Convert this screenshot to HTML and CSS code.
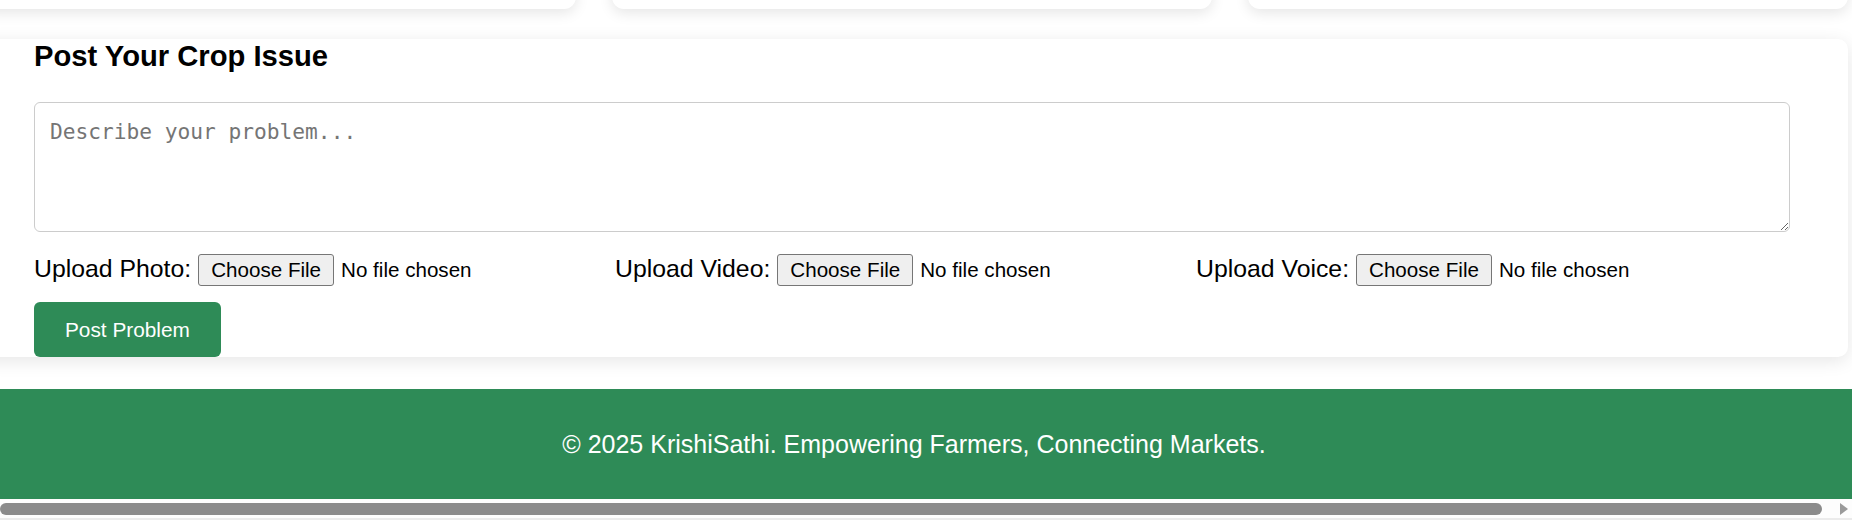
FILE: index.html
```html
<!DOCTYPE html>
<html lang="en">
<head>
<meta charset="utf-8">
<title>KrishiSathi – Post Your Crop Issue</title>
<link rel="stylesheet" href="styles.css">
</head>
<body>
<div class="page">
  <main class="main">
    <div class="cards">
      <div class="card"></div>
      <div class="card"></div>
      <div class="card"></div>
    </div>

    <section class="post-section">
      <h2 class="post-title">Post Your Crop Issue</h2>
      <textarea class="post-text" placeholder="Describe your problem..."></textarea>
      <div class="uploads">
        <div class="upload-group">
          <label class="upload-label">Upload Photo:</label>
          <input class="upload-input" type="file" accept="image/*">
        </div>
        <div class="upload-group">
          <label class="upload-label">Upload Video:</label>
          <input class="upload-input" type="file" accept="video/*">
        </div>
        <div class="upload-group">
          <label class="upload-label">Upload Voice:</label>
          <input class="upload-input" type="file" accept="audio/*">
        </div>
      </div>
      <button class="post-btn" type="button">Post Problem</button>
    </section>
  </main>

  <footer class="footer">
    <p class="footer-text">© 2025 KrishiSathi. Empowering Farmers, Connecting Markets.</p>
  </footer>
</div>

<div class="hscroll">
  <div class="hscroll-thumb"></div>
  <div class="hscroll-arrow"></div>
</div>
</body>
</html>
```

FILE: styles.css
```css
html, body {
  margin: 0;
  padding: 0;
}

body {
  background: #ffffff;
  font-family: "Liberation Sans", Arial, sans-serif;
  color: #000;
  height: 520px;
  overflow: hidden;
}

.page {
  margin-left: -24px;
  width: 1876px;
}

.main {
  padding-right: 4px;
}

/* cards row, scrolled mostly out of view */
.cards {
  display: grid;
  grid-template-columns: repeat(3, 1fr);
  column-gap: 36px;
  margin-top: -141px;
}

.card {
  height: 150px;
  background: #fff;
  border-radius: 12px;
  box-shadow: 0 4px 14px rgba(0, 0, 0, 0.1);
}

/* post section */
.post-section {
  margin-top: 30px;
  background: #fff;
  border-radius: 10px;
  box-shadow: 0 4px 18px rgba(0, 0, 0, 0.1);
  padding: 1px 58px 0 58px;
}

.post-title {
  margin: 0 0 29px;
  font-size: 29.2px;
  line-height: 33px;
  font-weight: bold;
}

.post-text {
  display: block;
  box-sizing: border-box;
  width: 100%;
  height: 130px;
  margin: 0 0 22px;
  padding: 16px 15px;
  border: 1px solid #cccccc;
  border-radius: 6px;
  font-family: "DejaVu Sans Mono", "Liberation Mono", monospace;
  font-size: 21.2px;
  background: #fff;
}

.post-text::placeholder {
  color: #757575;
}

.uploads {
  display: grid;
  grid-template-columns: repeat(3, 1fr);
  padding-right: 13px;
}

.upload-group {
  display: flex;
  align-items: baseline;
}

.upload-label {
  font-size: 24.8px;
  margin-right: 7px;
  white-space: nowrap;
}

.upload-input {
  font-family: "Liberation Sans", Arial, sans-serif;
  font-size: 20.6px;
  line-height: 24px;
  color: #000;
  width: 300px;
}

.upload-input::file-selector-button {
  font: inherit;
  line-height: 24px;
  color: #000;
  padding: 3px 12px;
  margin-right: 7px;
  border: 1px solid #767676;
  border-radius: 3px;
  background: #efefef;
}

.post-btn {
  display: block;
  margin-top: 16px;
  padding: 15px 31px;
  border: none;
  border-radius: 6px;
  background: #2e8b57;
  color: #fff;
  font-family: "Liberation Sans", Arial, sans-serif;
  font-size: 20.8px;
  line-height: 25px;
}

/* footer */
.footer {
  margin-top: 32px;
  background: #2e8b57;
  padding: 41px 0 40px;
  text-align: center;
}

.footer-text {
  margin: 0;
  color: #fff;
  font-size: 25px;
  line-height: 29px;
}

/* horizontal scrollbar strip */
.hscroll {
  height: 21px;
  box-sizing: border-box;
  padding-top: 4px;
  display: flex;
  align-items: flex-start;
  border-bottom: 2px solid #ebebeb;
  background: #fdfdfd;
}

.hscroll-thumb {
  width: 1822px;
  height: 12px;
  background: #8b8b8b;
  border-radius: 6px;
}

.hscroll-arrow {
  margin-left: 18px;
  width: 0;
  height: 0;
  border-top: 6px solid transparent;
  border-bottom: 6px solid transparent;
  border-left: 8px solid #9a9a9a;
}
```
